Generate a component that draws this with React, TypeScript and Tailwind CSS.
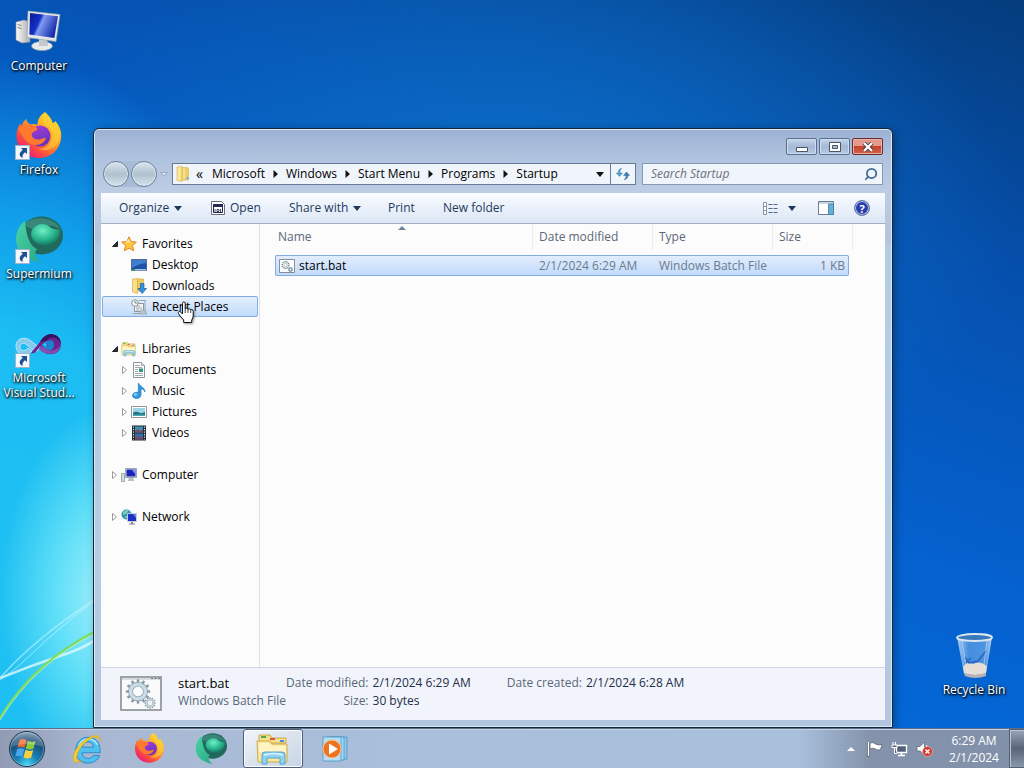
import React, { useId } from "react";
import { Search } from "lucide-react";

type IconProps = { className?: string };

const ShortcutArrow = () => (
  <span className="absolute bottom-0 left-0 block h-[15px] w-[15px] border border-[#9fb4cc] bg-[#f3f7fb]">
    <svg viewBox="0 0 13 13" className="block h-full w-full" aria-hidden="true">
      <path d="M5 2h6v6L9 6.2C7 7.6 6.2 9.4 6.6 12 3 10.600 2.400 6.600 6.800 4z" fill="#1d4f93" />
    </svg>
  </span>
);

const ComputerIcon = ({ className }: IconProps) => {
  const id = useId();
  return (
    <svg viewBox="0 0 48 48" className={className} aria-hidden="true">
      <defs>
        <linearGradient id={id + "s"} x1="0" y1="0" x2="1" y2=".4">
          <stop offset="0" stopColor="#0a1a90" />
          <stop offset=".4" stopColor="#1430c8" />
          <stop offset=".5" stopColor="#7f9cf0" />
          <stop offset="1" stopColor="#1a2fae" />
        </linearGradient>
        <linearGradient id={id + "t"} x1="0" y1="0" x2="1" y2="0">
          <stop offset="0" stopColor="#fafafa" />
          <stop offset="1" stopColor="#a9adb0" />
        </linearGradient>
      </defs>
      <path d="M1 14l8-2 6 2v20l-8 1-6-3z" fill={"url(#" + id + "t)"} stroke="#8d9296" strokeWidth=".6" />
      <path d="M2.500 16.500l4 1M2.500 19.500l4 1" stroke="#888" />
      <ellipse cx="27" cy="38" rx="10.500" ry="4.500" fill="#e8ebec" stroke="#9aa1a5" strokeWidth=".7" />
      <path d="M24 31h8l1 7h-9z" fill="#c4cacd" />
      <path d="M13 3l32 3.500-4 27-29-4z" fill="#e3e7e9" stroke="#9aa1a5" strokeWidth=".7" />
      <path d="M15 5l28 3.200-3.600 21.800-25-3.500z" fill={"url(#" + id + "s)"} />
    </svg>
  );
};

const FirefoxIcon = ({ className }: IconProps) => {
  const id = useId();
  return (
    <svg viewBox="0 0 48 48" className={className} aria-hidden="true">
      <defs>
        <linearGradient id={id + "b"} x1=".85" y1=".1" x2=".2" y2=".9">
          <stop offset="0" stopColor="#ffe226" />
          <stop offset=".4" stopColor="#ffa02a" />
          <stop offset=".7" stopColor="#ff5a36" />
          <stop offset="1" stopColor="#f0206e" />
        </linearGradient>
        <linearGradient id={id + "p"} x1=".3" y1="0" x2=".7" y2="1">
          <stop offset="0" stopColor="#a63ad8" />
          <stop offset="1" stopColor="#5a35b8" />
        </linearGradient>
      </defs>
      <path d="M30 0c4 4 7 7 7.500 11 2-.5 2.500-1 3-2 4.500 6 6.500 11 5.500 18C44.500 38 35.500 46 24 46 11.500 46 1.500 37 1.500 24c0-5 1.500-9.500 4-13 .2 1.500.7 2.500 1.500 3C7 11 8.500 9 11.500 7c0 3 1.500 4 4 5.500 2.500-.6 5-.5 7 .3C22.500 7 25.500 3 30 0z" fill={"url(#" + id + "b)"} />
      <circle cx="25" cy="24" r="10.500" fill={"url(#" + id + "p)"} />
      <path d="M3 17c3-4 8-5 13-4 3 .3 5 2 6.500 4-1 2-4 2.500-5.500 4-1 3 1 6 5 6.500 4 .5 5-2 9-1.500-1 4-5 7-10 7C12 33 9 26 3 17z" fill="#ff7a2e" />
      <path d="M30 13c6 2 8.500 8 7 14-1.500 6-7 10-14 10 9 4 20-1 21.500-12C45 17 40 12 30 4c-2 3-2 6 0 9z" fill="#ffd43a" opacity=".55" />
    </svg>
  );
};

const SupermiumIcon = ({ className }: IconProps) => {
  const id = useId();
  return (
    <svg viewBox="0 0 48 48" className={className} aria-hidden="true">
      <defs>
        <linearGradient id={id + "l"} x1="0" y1="0" x2="1" y2="1">
          <stop offset="0" stopColor="#4bd3a6" />
          <stop offset="1" stopColor="#27a985" />
        </linearGradient>
        <radialGradient id={id + "c"} cx=".4" cy=".3" r=".7">
          <stop offset="0" stopColor="#6ff0c4" />
          <stop offset=".6" stopColor="#28b58d" />
          <stop offset="1" stopColor="#157661" />
        </radialGradient>
      </defs>
      <ellipse cx="26.500" cy="19.500" rx="21.500" ry="19" fill="#22695d" />
      <path d="M8 9C18-1 39 0 46 14 37 7 27 9 20 14z" fill="#39877a" />
      <path d="M10 5C-3 15-2 36 14 42c3 2 7 4 12 4-6-4-7-10-4-13C12 28 11 13 10 5z" fill={"url(#" + id + "l)"} />
      <path d="M17 14c5-8 14-7 18-3 4 3 7 2 10 3 0 11-10 18-19 15-7-2-12-8-9-15z" fill={"url(#" + id + "c)"} />
    </svg>
  );
};

const VisualStudioIcon = ({ className }: IconProps) => (
  <svg viewBox="0 0 48 48" className={className} aria-hidden="true">
    <path d="M1 26c0-8 9-10 15-5l9 7c-3 4-5 4-7 2l-6-5c-3-3-7-2-7 2 0 4 5 5 8 1l4 3C10 38 1 34 1 26z" fill="#85c9ef" stroke="#d4effb" strokeWidth=".8" />
    <path d="M16 33l9-11C32 11 46 13 46 24S33 38 24 29l3-4 5 4V21c-4 2-6 5-9 8-2 3-4 5-7 4z" fill="#6a2592" />
    <path d="M25 22C31 10 45 12 46 24c-3-7-10-9-15-3z" fill="#37125f" />
    <path d="M28 27c6 6 11 3 11-2 0-6-5-6-9-2l4 3z" fill="#1b83cf" />
    <path d="M24 29c8 8 21 6 22-5-2 5-9 9-15 5l-4-3z" fill="#874eb2" />
  </svg>
);

const RecycleBinIcon = ({ className }: IconProps) => {
  const id = useId();
  return (
    <svg viewBox="0 0 48 48" className={className} aria-hidden="true">
      <defs>
        <linearGradient id={id} x1="0" y1="0" x2="1" y2="0">
          <stop offset="0" stopColor="#c9e2f8" stopOpacity=".85" />
          <stop offset=".35" stopColor="#6fa9e6" stopOpacity=".6" />
          <stop offset=".8" stopColor="#7fb5ea" stopOpacity=".6" />
          <stop offset="1" stopColor="#dcedfb" stopOpacity=".9" />
        </linearGradient>
      </defs>
      <path d="M7 5h35l-6 37q-12 5-22 0z" fill={"url(#" + id + ")"} />
      <path d="M13 35q4-6 10-3 7-4 14 2l-1 7q-11 4-22 0z" fill="#e6ddd4" />
      <path d="M14 41q10 4 22 0v3q-11 4-21 0z" fill="#b7b1b4" />
      <ellipse cx="24.500" cy="5.500" rx="17.500" ry="3.500" fill="#3a78bd" stroke="#dce7ef" strokeWidth="1.800" />
      <path d="M15 25l4 6 9-2 8-10M15 31l6-5" stroke="#2a5fc0" strokeWidth="1.400" fill="none" />
      <path d="M12 9l5 31M37 9l-4 31" stroke="#d9eafa" strokeWidth="1" opacity=".5" />
    </svg>
  );
};

const IEIcon = ({ className }: IconProps) => (
  <svg viewBox="0 0 34 34" className={className} aria-hidden="true">
    <path d="M31 18.500c0-8-5-14-13-14S5 11 5 18.500 10 32 18 32c6 0 10.500-3 12.500-8h-7c-1 2-3 3-5.500 3-4 0-6-2.500-6.200-6H31zM12 15c.8-3.500 3-5.500 6-5.500s5.500 2 6 5.500z" fill="#4fc0f0" stroke="#1678bd" strokeWidth=".8" />
    <path d="M8 14c2-5 6-7.500 10-7.500s8 2 10 6" fill="none" stroke="#b6ecfd" strokeWidth="1.600" />
    <path d="M31 9C32 2 26 1 18 5.500 9 10.500 2 20 2.500 27c.3 5 5 5 9 2.500-3 1-5.500.5-5.500-3C6 20 12 11 21 6c5-3 9-2.500 10 3z" fill="#f7cf2c" stroke="#d99b10" strokeWidth=".6" />
  </svg>
);

const StartOrb = () => {
  const id = useId();
  return (
    <svg viewBox="0 0 38 38" className="h-[38px] w-[38px]" aria-hidden="true">
      <defs>
        <radialGradient id={id} cx=".5" cy=".95" r=".95">
          <stop offset="0" stopColor="#45d8f5" />
          <stop offset=".35" stopColor="#187fb5" />
          <stop offset=".75" stopColor="#174873" />
          <stop offset="1" stopColor="#7493b0" />
        </radialGradient>
      </defs>
      <circle cx="19" cy="19" r="17.500" fill={"url(#" + id + ")"} stroke="#20384f" />
      <circle cx="19" cy="19" r="16.500" fill="none" stroke="#c4dced" strokeOpacity=".5" strokeWidth=".8" />
      <path d="M11.500 10c2.500-1.200 4.500-1.200 7 .2l-2 7.600c-2.500-1.300-4.500-1.300-7-.2z" fill="#f4672b" />
      <path d="M19.800 10.800c2.500 1.400 5 1.400 7.700.2l-2 7.600c-2.700 1.200-5.200 1.200-7.700-.2z" fill="#8ecb3c" />
      <path d="M9.200 19c2.500-1.100 4.500-1.100 7 .2l-2 7.600c-2.500-1.300-4.500-1.300-7-.2z" fill="#4aa5e8" />
      <path d="M17.500 19.800c2.500 1.400 5 1.400 7.700.2l-2 7.600c-2.700 1.200-5.200 1.200-7.700-.2z" fill="#fcd03c" />
      <path d="M3 17C4 7 12 2 19 2s15 5 16 15c-9-4-23-4-32 0z" fill="#fff" opacity=".22" />
    </svg>
  );
};

const LibraryIcon = ({ className }: IconProps) => (
  <svg viewBox="0 0 34 34" className={className} aria-hidden="true">
    <path d="M3 3h11l2 3h14v5H3z" fill="#f5df8c" stroke="#c59b35" strokeWidth=".8" />
    <path d="M5 4h5v2H5z" fill="#4caf50" />
    <path d="M14 6h5v2h-5z" fill="#d95a3c" />
    <path d="M24 8h4v2h-4z" fill="#4a8fd4" />
    <path d="M1 9h13l2 3h15v18H2z" fill="#f9e7a0" stroke="#cda440" strokeWidth=".9" />
    <path d="M3 11h10l2 3h15v6H3z" fill="#fff5c4" />
    <path d="M6 32V23q0-3 3-3h17q3 0 3 3v9h-5v-6H11v6z" fill="#8fd3f0" stroke="#4a9cc9" strokeWidth=".9" />
    <path d="M8 23q10-3 19 0" fill="none" stroke="#e2f6fd" strokeWidth="1.400" />
  </svg>
);

const MediaPlayerIcon = () => (
  <svg viewBox="0 0 30 28" className="h-[28px] w-[30px]" aria-hidden="true">
    <path d="M10 2h17v22H10z" fill="#8fc9ea" stroke="#4a94c2" strokeWidth=".8" />
    <path d="M7 2h17v23H7z" fill="#a7d8f2" stroke="#4a94c2" strokeWidth=".8" />
    <path d="M3 2h18v24H3z" fill="#b5def3" stroke="#4a94c2" strokeWidth=".8" />
    <circle cx="12" cy="14" r="9" fill="#ee7420" stroke="#f9c092" />
    <path d="M9 8.500l9 5.500-9 5.500z" fill="#fff" />
  </svg>
);

const GEAR_ANGLES = [0, 30, 60, 90, 120, 150, 180, 210, 240, 270, 300, 330];

const Gear = ({ x, y, r }: { x: number; y: number; r: number }) => (
  <g>
    {GEAR_ANGLES.map((a) => (
      <rect key={a} x={x - r * 0.13} y={y - r * 1.28} width={r * 0.26} height={r * 0.4} fill="#8c9aa5" transform={"rotate(" + a + " " + x + " " + y + ")"} />
    ))}
    <circle cx={x} cy={y} r={r * 0.78} fill="none" stroke="#8c9aa5" strokeWidth={r * 0.5} />
    <circle cx={x} cy={y} r={r * 0.78} fill="none" stroke="#c9dde8" strokeWidth={r * 0.36} />
  </g>
);

const BatchIcon = ({ className }: IconProps) => (
  <svg viewBox="0 0 42 36" className={className} aria-hidden="true">
    <path d="M1 1h40v33H1z" fill="#f8fafb" stroke="#7f868c" strokeWidth="1.500" />
    <path d="M2 2h38v2H2z" fill="#d7dcdf" />
    <path d="M31 2.500h2M34.500 2.500h2M38 2.500h2" stroke="#6d7a84" />
    <Gear x={18} y={15.500} r={9.500} />
    <Gear x={30} y={27} r={4.500} />
  </svg>
);

const SmallBatchIcon = () => (
  <svg viewBox="0 0 16 14" className="h-[14px] w-4 shrink-0" aria-hidden="true">
    <path d="M.5.5h15v13H.5z" fill="#fafcfd" stroke="#85909a" />
    <circle cx="6.500" cy="6" r="3.300" fill="none" stroke="#6f7f8c" strokeWidth="1.400" strokeDasharray="1.200 .8" />
    <circle cx="6.500" cy="6" r="1.700" fill="none" stroke="#9fb2c0" strokeWidth=".7" />
    <circle cx="11.500" cy="10.500" r="1.700" fill="none" stroke="#6f7f8c" strokeWidth="1.200" />
  </svg>
);

const StarIcon = () => (
  <svg viewBox="0 0 16 16" className="h-4 w-4" aria-hidden="true">
    <path d="M8 .8l2.200 4.800 5.200.5-3.900 3.500 1.200 5.200L8 12.200l-4.700 2.600 1.200-5.200L.6 6.100l5.200-.5z" fill="#ffc43a" stroke="#e07b1c" strokeWidth=".9" />
    <path d="M8 3l1.300 3.300 3 .4H4z" fill="#ffe796" />
  </svg>
);
const DesktopIcon = () => (
  <svg viewBox="0 0 16 16" className="h-4 w-4" aria-hidden="true">
    <path d="M.5 2.500h15v11H.5z" fill="#1d51a8" stroke="#4d6a95" />
    <path d="M1 3h14v3Q7 7 1 11z" fill="#3f7fd2" />
    <path d="M1 12h14v1.500H1z" fill="#a5c4e6" />
    <path d="M1 12h3v1.500H1z" fill="#2d8c4c" />
  </svg>
);
const DownloadsIcon = () => (
  <svg viewBox="0 0 16 16" className="h-4 w-4" aria-hidden="true">
    <path d="M1.500 1l5-.5v15l-5-1.500z" fill="#f7df88" stroke="#cfa53f" strokeWidth=".6" />
    <path d="M6.500 1h6v12h-6z" fill="#ecc95c" stroke="#cfa53f" strokeWidth=".6" />
    <path d="M9.500 5.500h3.500v5h2.500L11.200 15.500 7 10.500h2.500z" fill="#3492e2" stroke="#17609f" strokeWidth=".7" />
  </svg>
);
const RecentIcon = () => (
  <svg viewBox="0 0 16 16" className="h-4 w-4" aria-hidden="true">
    <path d="M3.500 4.500h9v8h-9z" fill="#f1f4f6" stroke="#8c959d" />
    <path d="M8 1.500h7M14 2v11M2 14.500h13M5 7h4M5 9h6M5 11h3" stroke="#9da7af" />
    <circle cx="4" cy="4" r="3.200" fill="#fff" stroke="#87919a" />
    <path d="M4 2v2h2" stroke="#4f6070" strokeWidth=".8" fill="none" />
    <path d="M9.500 11h5l1 4h-7z" fill="#bfc6cb" stroke="#8c959d" strokeWidth=".6" />
  </svg>
);
const DocumentIcon = () => (
  <svg viewBox="0 0 16 16" className="h-4 w-4" aria-hidden="true">
    <path d="M2.500.5h8l3 3v12h-11z" fill="#fff" stroke="#8b949b" />
    <path d="M10.500.5v3h3" fill="#dce2e6" stroke="#8b949b" strokeWidth=".8" />
    <path d="M4 3.500h5M4 5.500h7M4 7.500h3M4 9.500h3M4 11.500h8M4 13.500h8" stroke="#8592a0" strokeWidth=".8" />
    <path d="M8 6.500h4v3.500H8z" fill="#2f9a80" />
  </svg>
);
const MusicIcon = () => (
  <svg viewBox="0 0 16 16" className="h-4 w-4" aria-hidden="true">
    <path d="M8 .5c.5 3 6 3.500 6 8.500-1-2.500-2.500-3-4-3V12c0 2-2 3.500-4.300 3.500C3.200 15.500 1.500 14.300 1.500 12.500c0-2 2-3.300 4-3.300.8 0 1.300.2 1.800.4V.5z" fill="#2f9ae2" stroke="#1b6dae" strokeWidth=".6" />
    <ellipse cx="4.500" cy="11.500" rx="1.700" ry="1" fill="#a8dcfa" />
  </svg>
);
const PicturesIcon = () => (
  <svg viewBox="0 0 16 16" className="h-4 w-4" aria-hidden="true">
    <path d="M.5 2.500h15v11H.5z" fill="#fff" stroke="#8d979f" />
    <path d="M2 4h12v8H2z" fill="#9bd5e6" />
    <path d="M2 9q3-2 6-.5T14 8v4H2z" fill="#21727f" />
    <path d="M2 10.500h12V12H2z" fill="#49a7b4" />
  </svg>
);
const VideosIcon = () => (
  <svg viewBox="0 0 16 16" className="h-4 w-4" aria-hidden="true">
    <path d="M1 .5h14v15H1z" fill="#20262c" />
    <path d="M4 1.500h8v6H4z" fill="#3b94b5" />
    <path d="M4 8.500h8v6H4z" fill="#2f6fae" />
    <path d="M4 6l3-2 2 2 3-2v3.500H4zM4 12l3-1 5 2v1.500H4z" fill="#7b4a66" />
    <path d="M2.500 1.500v13M13.500 1.500v13" stroke="#e2e7ea" strokeWidth="1.200" strokeDasharray="1.300 1.200" />
  </svg>
);
const SmallComputerIcon = () => (
  <svg viewBox="0 0 16 16" className="h-4 w-4" aria-hidden="true">
    <path d="M.5 6.500h3v8h-3z" fill="#d6dfdc" stroke="#8b9896" strokeWidth=".8" />
    <path d="M4.500 1.500h11v9h-11z" fill="#dfe5e9" stroke="#8a949c" strokeWidth=".8" />
    <path d="M5.500 2.500h9v7h-9z" fill="#1a22b8" />
    <path d="M10.500 2.500h4v5z" fill="#7f92ec" />
    <path d="M8 11h4l1.500 3h-7z" fill="#b8c0c6" />
  </svg>
);
const NetworkIcon = () => (
  <svg viewBox="0 0 16 16" className="h-4 w-4" aria-hidden="true">
    <circle cx="5.500" cy="5.500" r="5" fill="#2a93b8" />
    <path d="M2 3q3-3 6-1.500L5 5 2 6zM3 8l3-1 1 3z" fill="#7ed0a8" />
    <path d="M6.500 4.500h9v8h-9z" fill="#1c2fc4" stroke="#c3ccd3" />
    <path d="M11.500 5h3.500v4z" fill="#5f82ea" />
    <path d="M10 13h2v1.500h2v1H8v-1h2z" fill="#7c8890" />
  </svg>
);

const Folder = () => (
  <svg viewBox="0 0 16 16" className="h-4 w-4 shrink-0" aria-hidden="true">
    <path d="M2 1l5-.5v15L2 14.500z" fill="#f9e795" stroke="#d3ad4b" strokeWidth=".6" />
    <path d="M7 1.500h5l1.500 1V14H7z" fill="#f0d066" stroke="#d3ad4b" strokeWidth=".6" />
    <path d="M9 3v10" stroke="#fff3bb" />
    <path d="M11.500 11h2.500v2.500h-2.500z" fill="#7eb0d8" />
  </svg>
);

const CaretDown = ({ className }: IconProps) => (
  <svg viewBox="0 0 8 5" className={"h-[5px] w-2 shrink-0 " + (className ?? "")} aria-hidden="true">
    <path d="M0 0h8L4 5z" fill="currentColor" />
  </svg>
);
const CrumbArrow = () => (
  <svg viewBox="0 0 5 8" className="h-2 w-[5px] shrink-0" aria-hidden="true">
    <path d="M.5 0L5 4 .5 8z" fill="#111" />
  </svg>
);
const Twisty = ({ open }: { open: boolean }) => (
  <svg viewBox="0 0 8 8" className="h-2 w-2" aria-hidden="true">
    {open ? <path d="M6.500 1.500v5h-5z" fill="#333" stroke="#222" /> : <path d="M1.500.5L5.500 4 1.500 7.500z" fill="#fff" stroke="#9a9a9a" />}
  </svg>
);

const desktopIcons = [
  { label: "Computer", Icon: ComputerIcon, shortcut: false },
  { label: "Firefox", Icon: FirefoxIcon, shortcut: true },
  { label: "Supermium", Icon: SupermiumIcon, shortcut: true },
  { label: "Microsoft Visual Stud...", Icon: VisualStudioIcon, shortcut: true },
];

const DesktopItem = ({ label, Icon, shortcut }: { label: string; Icon: React.FC<IconProps>; shortcut: boolean }) => (
  <button className="flex h-[104px] w-[76px] flex-col items-center">
    <span className="relative block h-12 w-12 shrink-0">
      <Icon className="h-full w-full" />
      {shortcut && <ShortcutArrow />}
    </span>
    <span className="mt-[2px] text-center text-[12px] leading-[15px] text-white [text-shadow:1px_1px_2px_#000,0_1px_3px_#000]">{label}</span>
  </button>
);

const groups = [
  {
    label: "Favorites",
    Icon: StarIcon,
    open: true,
    items: [
      { label: "Desktop", Icon: DesktopIcon },
      { label: "Downloads", Icon: DownloadsIcon },
      { label: "Recent Places", Icon: RecentIcon, selected: true },
    ],
  },
  {
    label: "Libraries",
    Icon: () => <LibraryIcon className="h-4 w-4" />,
    open: true,
    expandable: true,
    items: [
      { label: "Documents", Icon: DocumentIcon },
      { label: "Music", Icon: MusicIcon },
      { label: "Pictures", Icon: PicturesIcon },
      { label: "Videos", Icon: VideosIcon },
    ],
  },
  { label: "Computer", Icon: SmallComputerIcon, open: false, items: [] },
  { label: "Network", Icon: NetworkIcon, open: false, items: [] },
];

const NavigationPane = () => (
  <nav className="flex w-[159px] shrink-0 flex-col gap-[21px] border-r border-[#d9e3ee] px-px pt-[9px] text-black" aria-label="Navigation pane">
    {groups.map((g) => (
      <ul key={g.label}>
        <li>
          <button className="flex h-[21px] w-full items-center pl-[9px]">
            <Twisty open={g.open} />
            <span className="ml-[2px]"><g.Icon /></span>
            <span className="ml-[5px]">{g.label}</span>
          </button>
        </li>
        {g.items.map((item) => (
          <li key={item.label}>
            <button
              className={
                "relative flex h-[21px] w-full items-center rounded-[2px] border pl-[18px] " +
                ("selected" in item && item.selected ? "border-[#84acdd] bg-linear-to-b from-[#e4effc] to-[#c1dbfc]" : "border-transparent")
              }
            >
              <span className="w-2">{g.expandable && <Twisty open={false} />}</span>
              <span className="ml-[2px]"><item.Icon /></span>
              <span className="ml-[5px]">{item.label}</span>
              {"selected" in item && item.selected && <HandCursor />}
            </button>
          </li>
        ))}
      </ul>
    ))}
  </nav>
);

const HandCursor = () => (
  <svg viewBox="0 0 18 23" className="absolute top-[4px] left-[74px] z-10 h-[23px] w-[18px] drop-shadow-[1px_1px_1px_rgba(0,0,0,0.4)]" aria-hidden="true">
    <path d="M5.500 13V2.500q0-1.500 1.300-1.500T8.200 2.500V8q.4-1 1.500-.9 1.300.1 1.300 1.400.3-.8 1.400-.7 1.200.1 1.300 1.400.3-.6 1.200-.5 1.300.2 1.300 1.600V15q0 2-1.500 4v2.500h-8V19Q3.500 16 1.500 12.500q-.6-1.300.3-1.900 1-.6 2.100.6z" fill="#fff" stroke="#111" />
    <path d="M8.200 8v4M11 8.500V12M13.700 9.500V12" stroke="#111" strokeWidth=".8" />
  </svg>
);

const crumbs = ["Microsoft", "Windows", "Start Menu", "Programs", "Startup"];

const AddressRow = () => (
  <div className="flex h-[26px] items-center px-[2px]">
    <div className="flex shrink-0 items-center gap-[2px] rounded-full bg-[#a9bcd6]">
      {["Back", "Forward"].map((n) => (
        <button key={n} aria-label={n} className="h-[26px] w-[26px] rounded-full border border-[#6c8097] bg-linear-to-b from-[#dbe6ee] via-[#b0c2cf] to-[#d3e3ee] shadow-[inset_0_0_0_1px_#e2ebf3]" />
      ))}
    </div>
    <button aria-label="Recent pages" className="ml-[2px] flex w-[10px] justify-center">
      <svg viewBox="0 0 8 5" className="h-[5px] w-2"><path d="M.5.5h7L4 4z" fill="#d8e3f0" stroke="#8d9fb7" strokeWidth=".8" /></svg>
    </button>
    <div className="ml-[3px] flex h-[22px] min-w-0 flex-[462_1_0%] border border-[#667b9a] bg-[#f0f4fb]">
      <nav aria-label="Address" className="flex min-w-0 flex-1 items-center pl-[2px] text-black">
        <Folder />
        <button aria-label="Show parent folders" className="ml-1 w-[9px] text-[14px]">«</button>
        <ol className="flex items-center">
          {crumbs.map((c, i) => (
            <li key={c} className="flex items-center">
              {i > 0 && <CrumbArrow />}
              <button className="px-[8px] whitespace-nowrap">{c}</button>
            </li>
          ))}
        </ol>
      </nav>
      <button aria-label="Previous locations" className="flex w-[20px] items-center justify-center text-[#111]"><CaretDown /></button>
      <button aria-label="Refresh" className="flex w-[25px] items-center justify-center border-l border-[#667b9a]">
        <svg viewBox="0 0 14 12" className="h-3 w-[14px]" aria-hidden="true">
          <path d="M6 .5Q3.500 1 4 5h2.500L3.500 8.500.3 5h2Q2 .5 6 .5z" fill="#4f9fd0" stroke="#2c76aa" strokeWidth=".4" />
          <path d="M8 11.500Q10.500 11 10 7.500H7.500l3-3.500 3.200 3.500h-2q.3 4-3.700 4z" fill="#3b7fb2" stroke="#1f5786" strokeWidth=".4" />
        </svg>
      </button>
    </div>
    <label className="ml-[6px] flex h-[22px] min-w-0 flex-[223_1_0%] items-center border border-[#8598b4] bg-[#f0f4fb] px-2">
      <input type="search" aria-label="Search Startup" placeholder="Search Startup" className="min-w-0 flex-1 bg-transparent outline-none placeholder:text-[#6d7078] placeholder:italic" />
      <Search className="-mr-1 h-[14px] w-[14px] shrink-0 -scale-x-100 text-[#3f6a94]" strokeWidth={3} aria-hidden="true" />
    </label>
  </div>
);

const CaptionButtons = () => (
  <div className="flex justify-end gap-[2px] pr-[2px]">
    <button aria-label="Minimize" className="flex h-[17px] w-[31px] items-center justify-center rounded-[2px] border border-[#586f90] bg-linear-to-b from-[#c6d6ea] via-[#a4b9d5] to-[#b4cae3] shadow-[inset_0_0_0_1px_#cfdded]">
      <svg viewBox="0 0 12 10" className="h-[10px] w-3"><path d="M.5 5.500h11v4H.5z" fill="#fff" stroke="#4a5666" /></svg>
    </button>
    <button aria-label="Maximize" className="flex h-[17px] w-[31px] items-center justify-center rounded-[2px] border border-[#586f90] bg-linear-to-b from-[#c6d6ea] via-[#a4b9d5] to-[#b4cae3] shadow-[inset_0_0_0_1px_#cfdded]">
      <svg viewBox="0 0 12 10" className="h-[10px] w-3"><path d="M.5.500h11v9H.5z" fill="#fff" stroke="#4a5666" /><path d="M3.500 3.500h5v3h-5z" fill="#a9bbd2" stroke="#4a5666" /></svg>
    </button>
    <button aria-label="Close" className="flex h-[17px] w-[31px] items-center justify-center rounded-[2px] border border-[#6b2a2c] bg-linear-to-b from-[#e39a8d] from-45% via-[#c4432c] via-50% to-[#d6604a] shadow-[inset_0_0_0_1px_#e9b2a6]">
      <svg viewBox="0 0 12 10" className="h-[10px] w-3"><path d="M2 1l8 8M10 1L2 9" stroke="#51383c" strokeWidth="4" /><path d="M2 1l8 8M10 1L2 9" stroke="#fff" strokeWidth="2.400" /></svg>
    </button>
  </div>
);

const CommandBar = () => (
  <div className="flex h-[31px] items-center justify-between border-b border-[#a0afc3] bg-linear-to-b from-[#fafcff] via-[#eaf1fb] to-[#dce6f4] pr-[15px] pl-[18px] text-[#1e395b]">
    <div className="flex items-center whitespace-nowrap">
      <button className="flex w-[92px] items-center gap-[5px]">Organize <CaretDown /></button>
      <button className="flex w-[78px] items-center gap-[5px]">
        <svg viewBox="0 0 14 14" className="h-[14px] w-[14px]" aria-hidden="true">
          <path d="M.5.5h10l3 3v10H.5z" fill="#fff" stroke="#6b6f75" />
          <path d="M2.500 3.500h9v8h-9z" fill="#fff" stroke="#20254a" />
          <path d="M2 3h10v3H2z" fill="#252a52" />
          <path d="M4 8v3M6 8.500h2v2H6zM9.500 8v3" stroke="#20254a" strokeWidth=".8" fill="none" />
        </svg>
        Open
      </button>
      <button className="flex w-[99px] items-center gap-[5px]">Share with <CaretDown /></button>
      <button className="w-[55px] text-left">Print</button>
      <button>New folder</button>
    </div>
    <div className="flex items-center">
      <button aria-label="Change your view">
        <svg viewBox="0 0 15 13" className="h-[13px] w-[15px]" aria-hidden="true">
          <path d="M.5.500h3v12h-3z" fill="#fff" stroke="#8894a3" />
          <path d="M1 4.500h2M1 8.500h2" stroke="#8894a3" />
          <path d="M5.500 2.500h9M5.500 6.500h9M5.500 10.500h9" stroke="#51698a" strokeDasharray="4 1" />
        </svg>
      </button>
      <button aria-label="More view options" className="ml-[10px]"><CaretDown /></button>
      <button aria-label="Show the preview pane" className="ml-[22px]">
        <svg viewBox="0 0 16 14" className="h-[14px] w-4" aria-hidden="true">
          <path d="M.5.500h15v13H.5z" fill="#fff" stroke="#667d95" />
          <path d="M1 1h14v2H1z" fill="#c7d3df" />
          <path d="M10.500 3v10.500h5V3z" fill="#63b0d6" stroke="#3f7d9f" strokeWidth=".8" />
        </svg>
      </button>
      <button aria-label="Get help" className="ml-5 flex h-4 w-4 items-center justify-center rounded-full border border-[#6c7f9f] bg-[#2a3fae] text-[11px] leading-none font-bold text-white shadow-[inset_0_0_0_1px_#b9c6ea]">?</button>
    </div>
  </div>
);

const FileTable = () => (
  <div className="min-w-0 flex-1 overflow-hidden pl-[15px]">
    <table className="w-[574px] table-fixed border-separate border-spacing-0 text-left">
      <colgroup>
        <col className="w-[258px]" />
        <col className="w-[120px]" />
        <col className="w-[120px]" />
        <col className="w-[76px]" />
      </colgroup>
      <thead className="text-[#5b6878]">
        <tr className="h-[26px]">
          <th className="relative border-r border-[#e8eef5] pl-[3px] font-normal" aria-sort="ascending">
            Name
            <svg viewBox="0 0 8 4" className="absolute top-[2px] left-[123px] h-1 w-2" aria-hidden="true"><path d="M0 4l4-4 4 4z" fill="#6f8499" /></svg>
          </th>
          <th className="border-r border-[#e8eef5] pl-[6px] font-normal">Date modified</th>
          <th className="border-r border-[#e8eef5] pl-[6px] font-normal">Type</th>
          <th className="relative pl-[6px] font-normal after:absolute after:inset-y-0 after:-right-1 after:w-px after:bg-[#e8eef5]">Size</th>
        </tr>
      </thead>
      <tbody className="text-[#6d7b8c] before:block before:h-[5px]">
        <tr className="h-[21px] [&>td]:border-y [&>td]:border-[#84acdd] [&>td]:bg-linear-to-b [&>td]:from-[#e2edfc] [&>td]:to-[#c1dbfc]">
          <td className="rounded-l-[2px] border-l text-black">
            <span className="flex items-center gap-1 pl-[3px]"><SmallBatchIcon />start.bat</span>
          </td>
          <td className="pl-[6px] whitespace-nowrap">2/1/2024 6:29 AM</td>
          <td className="pl-[6px] whitespace-nowrap">Windows Batch File</td>
          <td className="rounded-r-[2px] border-r pr-[3px] text-right">1 KB</td>
        </tr>
      </tbody>
    </table>
  </div>
);

const DetailsPane = () => (
  <footer className="flex h-[53px] shrink-0 border-t border-[#ccd6e4] bg-[#f1f5fb] pt-[6px] pl-[19px] leading-[18px]">
    <BatchIcon className="mt-[2px] h-[36px] w-[42px] shrink-0" />
    <div className="ml-4 w-[108px] shrink-0 whitespace-nowrap">
      <p className="text-[13px] text-black">start.bat</p>
      <p className="text-[#5a6779]">Windows Batch File</p>
    </div>
    <dl className="grid h-9 grid-cols-[auto_auto] gap-x-1 whitespace-nowrap text-[#1e2d4a]">
      <dt className="text-right text-[#5a6779]">Date modified:</dt>
      <dd>2/1/2024 6:29 AM</dd>
      <dt className="text-right text-[#5a6779]">Size:</dt>
      <dd>30 bytes</dd>
    </dl>
    <dl className="ml-9 flex gap-1 whitespace-nowrap text-[#1e2d4a]">
      <dt className="text-[#5a6779]">Date created:</dt>
      <dd>2/1/2024 6:28 AM</dd>
    </dl>
  </footer>
);

const ExplorerWindow = () => (
  <main className="absolute top-[128px] right-[131px] bottom-0 left-[93px] flex flex-col rounded-t-[6px] border border-[#14273d] bg-[linear-gradient(180deg,#9cb0d3_0px,#b1c4df_30px,#bccde4_64px,#b6c2db_110px,#b3cde5_120px,#b7cce4_70%,#b2c6df_100%)] px-[7px] pb-[7px] shadow-[inset_0_0_0_1px_#d9eaf6,2px_2px_8px_rgba(0,0,0,0.3)]">
    <header className="h-[64px] shrink-0 pt-[9px]">
      <CaptionButtons />
      <div className="mt-[6px]"><AddressRow /></div>
    </header>
    <section className="flex min-h-0 flex-1 flex-col bg-[#fcfcfd]">
      <CommandBar />
      <div className="flex min-h-0 flex-1">
        <NavigationPane />
        <FileTable />
      </div>
      <DetailsPane />
    </section>
  </main>
);

const Wallpaper = () => (
  <svg viewBox="0 0 120 168" className="absolute -bottom-10 left-0 h-[168px] w-[120px]" aria-hidden="true">
    <path d="M0 78Q30 66 60 56T100 36" stroke="#e6fbff" strokeWidth="2.500" fill="none" opacity=".75" />
    <path d="M0 78Q35 38 100-4" stroke="#c6f4ff" strokeWidth="1.500" fill="none" opacity=".6" />
    <path d="M0 80Q18 68 36 50T100-4" stroke="#d5f8ff" strokeWidth="1" fill="none" opacity=".6" />
    <path d="M0 118Q34 62 96 31" stroke="#7fdc5c" strokeWidth="2" fill="none" />
    <path d="M0 120Q34 64 96 33" stroke="#c8f6a8" strokeWidth=".8" fill="none" />
  </svg>
);

const taskButtons = [
  { label: "Internet Explorer", icon: <IEIcon className="h-8 w-8" /> },
  { label: "Firefox", icon: <FirefoxIcon className="h-[31px] w-[31px]" /> },
  { label: "Supermium", icon: <SupermiumIcon className="h-8 w-8" /> },
  { label: "Windows Explorer", icon: <LibraryIcon className="h-[34px] w-[34px]" />, active: true },
  { label: "Windows Media Player", icon: <MediaPlayerIcon /> },
];

const Taskbar = () => (
  <footer className="flex h-10 shrink-0 items-stretch border-t border-[#5f6f85] bg-[linear-gradient(90deg,#919bb3_0px,#a9b8d2_90px,#a9bfdc_40%,#a8c0dc_78%,#8493ab_85%,#8291aa_100%)] shadow-[inset_0_1px_0_#c3d2e5]">
    <button aria-label="Start" className="flex w-[54px] items-center justify-center"><StartOrb /></button>
    <div className="ml-[3px] flex gap-[2px]">
      {taskButtons.map((b) => (
        <button
          key={b.label}
          aria-label={b.label}
          className={
            "flex w-[60px] items-center justify-center " +
            (b.active ? "rounded-[3px] border border-[#4e6077] bg-linear-to-br from-[#f3f6fa] via-[#dbe3ed] to-[#c7d5e6] shadow-[inset_0_0_0_1px_#fafcff]" : "")
          }
        >
          {b.icon}
        </button>
      ))}
    </div>
    <div className="ml-auto flex items-center">
      <button aria-label="Show hidden icons" className="w-2">
        <svg viewBox="0 0 8 5" className="h-[5px] w-2"><path d="M0 5l4-4 4 4z" fill="#fff" /></svg>
      </button>
      <button aria-label="Action Center" className="ml-3">
        <svg viewBox="0 0 16 16" className="h-4 w-4">
          <path d="M1.500 1v14.500" stroke="#3c485a" strokeWidth="2.800" />
          <path d="M1.500 1v14" stroke="#fff" strokeWidth="1.600" />
          <path d="M3 2q3-1.500 5.500 1 2.500 1.500 6.500.5l-1.500 5q-3 1.500-5.500-.7Q5.500 6.500 3 8z" fill="#fff" stroke="#4a586c" strokeWidth=".7" />
        </svg>
      </button>
      <button aria-label="Network" className="ml-2">
        <svg viewBox="0 0 17 16" className="h-4 w-[17px]">
          <path d="M5.500 4.500h10v7h-10z" fill="#52627a" stroke="#fff" strokeWidth="1.400" />
          <path d="M10.500 12v2M7 14.500h7" stroke="#fff" strokeWidth="1.600" />
          <path d="M2 1v3M4.500 1v3M1 4h5v2.500H1zM3.500 6.500v6H6" stroke="#fff" fill="#52627a" />
        </svg>
      </button>
      <button aria-label="Volume muted" className="ml-2">
        <svg viewBox="0 0 17 16" className="h-4 w-[17px]">
          <path d="M1 5.500h3L8.500 1v13L4 10H1z" fill="#fff" stroke="#536075" strokeWidth=".7" />
          <path d="M10.500 4q1.500 2 0 5" stroke="#fff" fill="none" />
          <circle cx="11.500" cy="10.500" r="5" fill="#d23a2f" stroke="#f2c8c2" strokeWidth=".6" />
          <path d="M9.500 8.500l4 4M13.500 8.500l-4 4" stroke="#fff" strokeWidth="1.500" />
        </svg>
      </button>
      <button className="ml-2 w-[66px] text-center leading-[17px] whitespace-nowrap text-white">
        <span className="block">6:29 AM</span>
        <span className="block">2/1/2024</span>
      </button>
      <button aria-label="Show desktop" className="ml-[2px] h-full w-[15px] border border-r-0 border-[#536176] bg-linear-to-b from-[#9aa6b8] via-[#586478] to-[#8a98ac] shadow-[inset_1px_1px_0_#b9c4d3]" />
    </div>
  </footer>
);

export default function App() {
  return (
    <div className="flex h-screen min-h-[480px] flex-col overflow-hidden font-['Open_Sans','Segoe_UI',sans-serif] text-[12px] leading-[16px] select-none [&_button]:cursor-default">
      <div className="relative flex min-h-0 flex-1 items-start justify-between overflow-hidden bg-[radial-gradient(ellipse_110px_190px_at_110px_82%,#a8f0fc_0%,#5fdff8_50%,transparent_100%),radial-gradient(ellipse_340px_560px_at_0%_84%,#1fc0f2_0%,#1cbdf3_50%,#10a0ea_70%,transparent_100%),radial-gradient(ellipse_500px_330px_at_50%_30%,#0c70c8_0%,transparent_100%),linear-gradient(200deg,#053d7d_0%,#0550ae_26%,#0562d0_55%,#0070df_100%)]">
        <Wallpaper />
        <div className="relative flex flex-col pt-2 pl-px">
          {desktopIcons.map((d) => (
            <DesktopItem key={d.label} {...d} />
          ))}
        </div>
        <div className="relative -mb-2 self-end pr-3">
          <DesktopItem label="Recycle Bin" Icon={RecycleBinIcon} shortcut={false} />
        </div>
        <ExplorerWindow />
      </div>
      <Taskbar />
    </div>
  );
}
